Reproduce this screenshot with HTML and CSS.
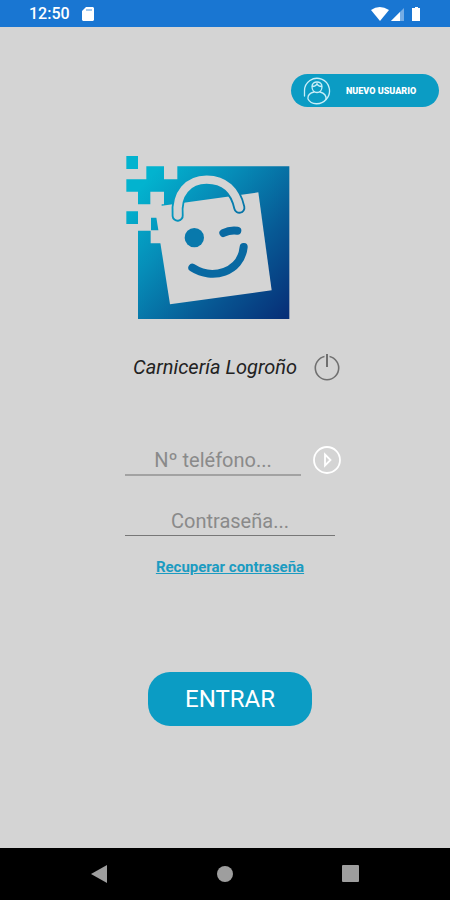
FILE: index.html
```html
<!DOCTYPE html>
<html lang="es">
<head>
<meta charset="utf-8">
<meta name="viewport" content="width=device-width, initial-scale=1">
<title>Carnicería Logroño</title>
<link rel="stylesheet" href="styles.css">
</head>
<body>
<header class="status">
  <span class="clock">12:50</span>
  <svg class="sd" viewBox="0 0 12 14" width="12" height="14" aria-hidden="true"><path fill="#fff" d="M4 0h7l1 1v12l-1 1H1l-1-1V4z"/><path stroke="#1976d2" stroke-width=".8" d="M5 2v2M7 2v2M9 2v2"/></svg>
  <svg class="signals" viewBox="0 0 51 16" width="51" height="16" aria-hidden="true">
    <path fill="#fff" d="M0 4Q8.500-2 18 4L9 15z"/>
    <path fill="#fff" opacity=".4" d="M33 2v13H20z"/>
    <path fill="#fff" d="M29 6v9H20z"/>
    <path fill="#fff" d="M44 1h3v1h2v13h-8V2h3z"/>
  </svg>
</header>
<main class="page">
  <button class="new-user" type="button">
    <svg viewBox="0 0 28 28" width="28" height="28" fill="none" stroke="#c9eef8" stroke-width="1.300" stroke-linecap="round" aria-hidden="true">
      <path d="M1.500 19V14A12.500 12.500 0 1 1 23 22.500C18 28.500 8 28 5 22C4.500 18 7 16 11 15"/>
      <path d="M17 15C21 16 23.500 18.500 23 22.500"/>
      <path d="M9 9.500C9 3.500 19 3.500 19 9.500C19 13 17 15.500 14 15.500C11 15.500 9 13 9 9.500C12 9.500 13.500 8.500 14 6.500C14.500 8.500 16 9.500 19 9.500"/>
    </svg>
    <span>NUEVO USUARIO</span>
  </button>
  <form class="login">
    <svg class="logo" viewBox="33 30 492 495" width="164" height="165" role="img" aria-label="Bolsa de la compra sonriente">
      <defs>
        <linearGradient id="sea" gradientUnits="userSpaceOnUse" x1="90" y1="110" x2="523" y2="500">
          <stop offset="0" stop-color="#02b3cf"/>
          <stop offset=".3" stop-color="#068db8"/>
          <stop offset=".65" stop-color="#075b96"/>
          <stop offset="1" stop-color="#073078"/>
        </linearGradient>
      </defs>
      <path fill="url(#sea)" d="M187 64H523V522H69V257H107V295H140V178H147V140H106V178H69V140H34V103H94V64H147V103H187ZM34 33H69V72H34ZM34 199H69V237H34ZM108 218H132V256H108Z"/>
      <path fill="#d4d4d4" d="M119 185L430 142L470 436L165 478Z"/>
      <g fill="none" stroke-linecap="round">
        <path stroke="url(#sea)" stroke-width="36" d="M188 212C182 145 220 104 275 104C330 104 362 138 373 188"/>
        <path stroke="#d4d4d4" stroke-width="25" d="M188 212C182 145 220 104 275 104C330 104 362 138 373 188"/>
        <path stroke="#0869a2" stroke-width="24" d="M232 368C292 407 378 382 386 306M325 264Q345 254 367 257"/>
      </g>
      <circle cx="238" cy="278" r="29" fill="#0879ac"/>
    </svg>
    <div class="row title-row">
      <h1>Carnicería Logroño</h1>
      <button class="icon" type="button" aria-label="Salir">
        <svg viewBox="0 0 28 28" width="28" height="28" fill="none" stroke="#707070" aria-hidden="true"><circle cx="14" cy="15" r="11.700" stroke-width="1.600"/><path stroke="#d4d4d4" stroke-width="5" d="M14 1V7"/><path stroke-width="2" d="M14 1V14"/></svg>
      </button>
    </div>
    <div class="row phone-row">
      <input class="field phone" type="tel" placeholder="Nº teléfono..." aria-label="Nº teléfono">
      <button class="icon" type="button" aria-label="Continuar">
        <svg viewBox="0 0 28 28" width="28" height="28" fill="none" stroke="#fff" stroke-width="1.800" aria-hidden="true"><circle cx="14" cy="14" r="13"/><path d="M12 8.500V19.500L17.500 14Z"/></svg>
      </button>
    </div>
    <input class="field password" type="password" placeholder="Contraseña..." aria-label="Contraseña">
    <a class="recover" href="#">Recuperar contraseña</a>
    <button class="enter" type="submit">ENTRAR</button>
  </form>
</main>
<nav class="system">
  <button type="button" aria-label="Atrás"><svg viewBox="0 0 18 18" width="18" height="18"><path fill="#9e9e9e" d="M1 9L17 0V18Z"/></svg></button>
  <button type="button" aria-label="Inicio"><svg viewBox="0 0 18 18" width="18" height="18"><circle cx="9" cy="9" r="8" fill="#9e9e9e"/></svg></button>
  <button type="button" aria-label="Recientes"><svg viewBox="0 0 18 18" width="18" height="18"><rect x="0" y="0" width="17" height="17" rx="1" fill="#9e9e9e"/></svg></button>
</nav>
</body>
</html>
```
FILE: styles.css
```css
* {
  box-sizing: border-box;
}

body {
  margin: 0;
  min-height: 100vh;
  display: flex;
  flex-direction: column;
  background: #d4d4d4;
  font-family: Roboto, "Liberation Sans", sans-serif;
}

button {
  border: 0;
  padding: 0;
  background: none;
  font-family: inherit;
  cursor: pointer;
}

svg {
  display: block;
}

.status {
  height: 27px;
  padding: 0 28px 0 29px;
  display: flex;
  align-items: center;
  gap: 12px;
  background: #1976d2;
  color: #fff;
}

.clock {
  font-size: 16px;
  font-weight: 500;
  line-height: 28px;
}

.signals {
  margin-left: auto;
}

.page {
  flex: 1;
  display: flex;
  flex-direction: column;
  padding: 47px 11px 24px;
}

.new-user {
  align-self: flex-end;
  width: 148px;
  height: 33px;
  padding-left: 12px;
  display: flex;
  align-items: center;
  gap: 15px;
  border-radius: 17px;
  background: #0b9cc4;
  color: #fff;
  font-size: 9px;
  font-weight: 900;
}

.login {
  width: 232px;
  margin: 48px auto 0;
  padding-left: 16px;
  display: flex;
  flex-direction: column;
}

.logo {
  margin-left: 1px;
}

.row {
  display: flex;
  align-items: center;
  justify-content: space-between;
}

.title-row {
  margin-top: 32px;
  padding-left: 8px;
  height: 30px;
}

h1 {
  margin: 0;
  font-size: 20px;
  font-weight: 400;
  font-style: italic;
  line-height: 30px;
  color: #222;
  white-space: nowrap;
}

.icon {
  flex: none;
}

.phone-row {
  margin-top: 62px;
}

.field {
  height: 32px;
  border: 0;
  border-bottom: 1px solid #777;
  border-radius: 0;
  padding: 2px 0 0;
  background: none;
  font-family: inherit;
  font-size: 20px;
  text-align: center;
  color: #333;
  outline: none;
}

.field::placeholder {
  color: #8a8a8a;
  opacity: 1;
}

.phone {
  width: 176px;
  border-bottom: 2px solid #a2a2a2;
}

.password {
  width: 210px;
  margin-top: 28px;
}

.recover {
  width: 210px;
  margin-top: 21px;
  font-size: 15px;
  font-weight: 700;
  line-height: 20px;
  text-align: center;
  color: #1b9bc1;
}

.enter {
  width: 164px;
  height: 54px;
  margin: 95px 0 0 23px;
  border-radius: 22px;
  background: #0b9cc4;
  color: #fff;
  font-size: 24px;
}

.system {
  height: 52px;
  padding: 0 90px;
  display: flex;
  align-items: center;
  justify-content: space-between;
  background: #000;
}
```
